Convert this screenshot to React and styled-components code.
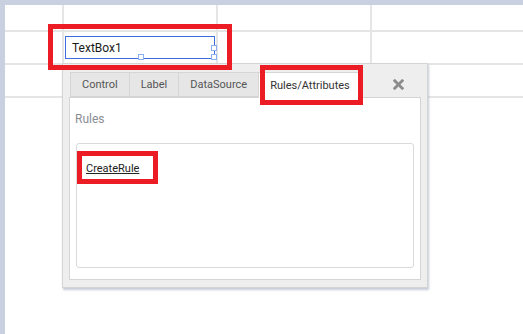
import React from "react";
import styled, { createGlobalStyle } from "styled-components";

const GlobalStyle = createGlobalStyle`
  html, body { margin: 0; padding: 0; }
  body {
    background: #c9d1e0;
    font-family: Roboto, "Liberation Sans", Arial, sans-serif;
  }
  #root { height: 334px; }
`;

const Page = styled.div`
  box-sizing: border-box;
  height: 334px;
  padding: 5px 0 0 5px;
`;

const Canvas = styled.div`
  position: relative;
  height: 100%;
  background: #ffffff;
  overflow: hidden;
`;

const Grid = styled.div`
  display: grid;
  grid-template-columns: 59px 154px 154px 1fr;
  grid-template-rows: 27px 33px 33px;
`;

const Cell = styled.div`
  box-sizing: border-box;
  border-right: ${(p) => (p.$last ? "none" : "2px solid #e5e5e5")};
  border-bottom: 2px solid #e5e5e5;
`;

/* red annotation frame drawn around the selected control on the canvas */
const ControlMarker = styled.div`
  position: absolute;
  left: 43px;
  top: 19px;
  width: 184px;
  height: 46px;
  box-sizing: border-box;
  border: 5px solid #ec1c24;
  padding: 7px 0 0 12px;
  z-index: 5;
`;

const TextBox = styled.div`
  position: relative;
  width: 150px;
  height: 23px;
  box-sizing: border-box;
  border: 1px solid #3d6ee0;
  padding-left: 6px;
  display: flex;
  align-items: center;
  font-size: 12px;
  color: #1a1a1a;
  background: #fff;
`;

const Handle = styled.span`
  position: absolute;
  width: 6px;
  height: 6px;
  box-sizing: border-box;
  border: 1px solid #8db0f2;
  background: #fff;
  left: ${(p) => p.$x}px;
  top: ${(p) => p.$y}px;
`;

const Dialog = styled.div`
  position: absolute;
  left: 57px;
  top: 58px;
  width: 366px;
  height: 225px;
  box-sizing: border-box;
  background: #eeeeee;
  border: 1px solid #d4d4d4;
  box-shadow: 1px 2px 2px rgba(160, 168, 188, 0.6);
  padding: 8px 6px 7px 6px;
  display: flex;
  flex-direction: column;
`;

const TabStrip = styled.div`
  display: flex;
  align-items: flex-start;
  height: 25px;
  padding-left: 1px;
`;

const Tab = styled.div`
  position: relative;
  box-sizing: border-box;
  height: ${(p) => (p.$active ? "26px" : "25px")};
  padding: 0 11px;
  margin-right: -1px;
  border: 1px solid #d5d5d5;
  border-bottom: ${(p) => (p.$active ? "none" : "1px solid #d5d5d5")};
  background: ${(p) => (p.$active ? "#ffffff" : "#e6e6e6")};
  color: ${(p) => (p.$active ? "#333" : "#555")};
  font-size: 11px;
  display: flex;
  align-items: center;
  z-index: ${(p) => (p.$active ? 2 : 1)};
  white-space: nowrap;
`;

/* red annotation overlaid on the active tab */
const TabMarker = styled.span`
  position: absolute;
  inset: -8px -2px -7px 1px;
  border: 5px solid #ec1c24;
  pointer-events: none;
`;

const Close = styled.div`
  margin-left: auto;
  margin-right: 17px;
  align-self: center;
  width: 11px;
  height: 11px;
  display: flex;
`;

const Panel = styled.div`
  flex: 1;
  box-sizing: border-box;
  background: #ffffff;
  border: 1px solid #d5d5d5;
  padding: 0 6px 11px 6px;
  display: flex;
  flex-direction: column;
`;

const SectionLabel = styled.div`
  margin: 14px 0 0 -1px;
  font-size: 12px;
  line-height: 14px;
  color: #8a8d93;
`;

const RulesBox = styled.div`
  flex: 1;
  margin-top: 17px;
  border: 1px solid #dadada;
  border-radius: 3px;
  padding: 7px 0 0 0;
`;

const LinkMarker = styled.div`
  width: 81px;
  height: 33px;
  box-sizing: border-box;
  border: 5px solid #ec1c24;
  padding: 1px 0 0 4px;
`;

const RuleLink = styled.a`
  font-size: 11px;
  line-height: 14px;
  color: #222;
  text-decoration: underline;
  cursor: pointer;
`;

const tabs = ["Control", "Label", "DataSource", "Rules/Attributes"];

export default function App() {
  return (
    <>
      <GlobalStyle />
      <Page>
        <Canvas>
          <Grid>
            {Array.from({ length: 12 }).map((_, i) => (
              <Cell key={i} $last={i % 4 === 3} />
            ))}
          </Grid>

          <ControlMarker>
            <TextBox>
              TextBox1
              <Handle $x={145} $y={8} />
              <Handle $x={145} $y={17} />
              <Handle $x={72} $y={17} />
            </TextBox>
          </ControlMarker>

          <Dialog>
            <TabStrip>
              {tabs.map((t) => (
                <Tab key={t} $active={t === "Rules/Attributes"}>
                  {t}
                  {t === "Rules/Attributes" && <TabMarker />}
                </Tab>
              ))}
              <Close>
                <svg width="11" height="11" viewBox="0 0 11 11">
                  <path
                    d="M1.8 1.8 L9.2 9.2 M9.2 1.8 L1.8 9.2"
                    stroke="#8c8c8c"
                    strokeWidth="2.8"
                    strokeLinecap="square"
                  />
                </svg>
              </Close>
            </TabStrip>
            <Panel>
              <SectionLabel>Rules</SectionLabel>
              <RulesBox>
                <LinkMarker>
                  <RuleLink>CreateRule</RuleLink>
                </LinkMarker>
              </RulesBox>
            </Panel>
          </Dialog>
        </Canvas>
      </Page>
    </>
  );
}
